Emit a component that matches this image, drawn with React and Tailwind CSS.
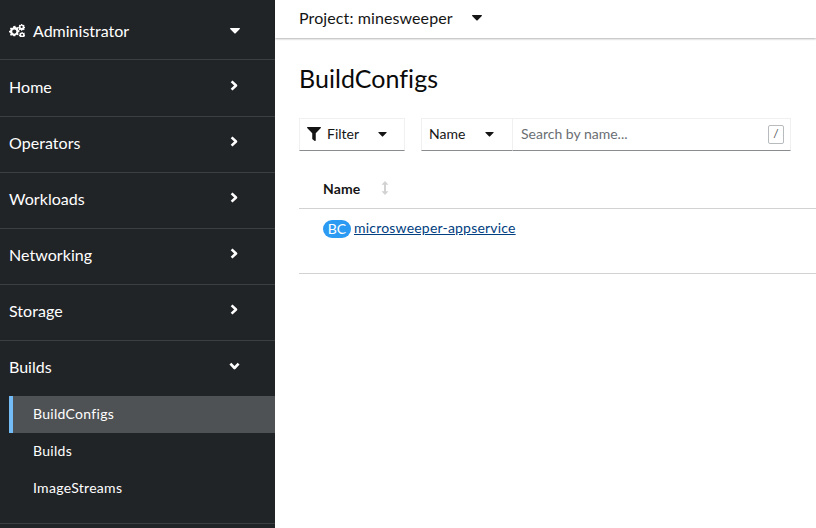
const sections = ['Home', 'Operators', 'Workloads', 'Networking', 'Storage'];
const subItems = ['BuildConfigs', 'Builds', 'ImageStreams'];

function Caret({ className }) {
  return (
    <svg viewBox="0 0 10 6" className={className} fill="currentColor">
      <path d="M0.6 0h8.8c.5 0 .8.6.4 1L5.4 5.4c-.2.2-.6.2-.8 0L.2 1C-.2.6.1 0 .6 0z" />
    </svg>
  );
}

function Cogs() {
  return (
    <svg viewBox="0 0 16 13" className="w-[16px] h-[13px]" fill="currentColor">
      <path fillRule="evenodd" d="M5 2l1.3-.2.4 1.1 1 .5 1.1-.5.9 1-.6 1 .3 1.1 1.1.5v1.3l-1.1.4-.3 1.1.6 1-.9.9-1.1-.5-1 .4-.4 1.2H4.4L4 11.6 3 11.2l-1.1.5-.9-.9.6-1-.4-1.1L0 8.3V7l1.2-.5.4-1.1-.6-1 .9-1 1.1.5 1-.5L4.4 2zM5.3 5.5a2.1 2.1 0 1 0 0 4.2 2.1 2.1 0 0 0 0-4.2z" />
      <path fillRule="evenodd" d="M13.2 0l.4.9.8.2.9-.4.6.7-.4.8.3.8.8.3v1l-.8.3-.3.8.4.8-.6.7-.9-.4-.8.2-.4.9h-1l-.3-.9-.8-.2-.9.4-.6-.7.4-.8-.3-.8-.8-.3v-1l.8-.3.3-.8-.4-.8.6-.7.9.4.8-.2.3-.9zM12.7 2a1.2 1.2 0 1 0 0 2.4 1.2 1.2 0 0 0 0-2.4z" transform="translate(1.2 0) scale(.9)" />
      <path fillRule="evenodd" d="M13.5 8l.3.7.7.2.7-.3.5.6-.3.7.2.7.7.3v.8l-.7.2-.2.7.3.7-.5.6-.7-.3-.7.2-.3.7h-.8l-.3-.7-.7-.2-.7.3-.5-.6.3-.7-.2-.7-.7-.2v-.8l.7-.3.2-.7-.3-.7.5-.6.7.3.7-.2.3-.7zM13.1 9.7a1 1 0 1 0 0 2 1 1 0 0 0 0-2z" />
    </svg>
  );
}

function NavRight() {
  return (
    <svg viewBox="0 0 8 11" className="w-[8px] h-[11px] mb-[3px]" fill="none" stroke="currentColor" strokeWidth="2.6" strokeLinejoin="round">
      <path d="M1.6 1.4L6 5.5L1.6 9.6" />
    </svg>
  );
}

function NavDown() {
  return (
    <svg viewBox="0 0 11 8" className="w-[11px] h-[8px] mb-[1px]" fill="none" stroke="currentColor" strokeWidth="2.6" strokeLinejoin="round">
      <path d="M1.4 1.6L5.5 6L9.6 1.6" />
    </svg>
  );
}

export default function App() {
  return (
    <div className="flex w-[816px] h-[528px] overflow-hidden bg-white font-['Lato',sans-serif]">
      <aside className="w-[275px] shrink-0 bg-[#212427] text-white">
        <div className="h-[60px] pl-[9px] pr-[35px] pt-[2px] flex items-center justify-between border-b border-[#3c3f42]">
          <div className="flex items-center gap-[8px]">
            <Cogs />
            <span className="text-[16px]">Administrator</span>
          </div>
          <Caret className="w-[10px] h-[6px]" />
        </div>
        {sections.map((s, i) => (
          <div
            key={s}
            className={
              i === 0
                ? 'h-[57px] pl-[9px] pr-[37px] pb-[3px] flex items-center justify-between border-b border-[#3c3f42]'
                : 'h-[56px] pl-[9px] pr-[37px] pb-[3px] flex items-center justify-between border-b border-[#3c3f42]'
            }
          >
            <span className="text-[16px] tracking-[0.05px]">{s}</span>
            <NavRight />
          </div>
        ))}
        <div className="border-b border-[#3c3f42] pb-[16px]">
          <div className="h-[55px] pl-[9px] pr-[35px] pb-[4px] flex items-center justify-between">
            <span className="text-[16px]">Builds</span>
            <NavDown />
          </div>
          {subItems.map((s, i) => (
            <div
              key={s}
              className={
                i === 0
                  ? 'h-[37px] ml-[9px] pl-[20px] pb-[2px] flex items-center text-[14px] tracking-[0.3px] bg-[#4f5255] border-l-[4px] border-[#73bcf7]'
                  : 'h-[37px] ml-[9px] pl-[24px] pb-[2px] flex items-center text-[14px] tracking-[0.3px]'
              }
            >
              {s}
            </div>
          ))}
        </div>
      </aside>

      <main className="flex-1 min-w-0">
        <div className="h-[38px] pl-[24px] pb-[3px] flex items-center gap-[19px] shadow-[0_1px_2px_rgba(3,3,3,0.3)] text-[16px] tracking-[0.1px] text-[#151515]">
          <span>Project: minesweeper</span>
          <Caret className="w-[10px] h-[6px]" />
        </div>

        <h1 className="mt-[24px] ml-[24px] text-[25px] leading-[32px] tracking-[0.05px] text-[#0a0a0a]">BuildConfigs</h1>

        <div className="mt-[24px] ml-[24px] flex text-[14px] text-[#151515]">
          <div className="w-[106px] h-[33px] flex items-center pl-[7px] pb-[3px] border border-[#f0f0f0] border-b-[#8a8d90]">
            <svg viewBox="0 0 512 512" className="w-[14px] h-[14px] mt-[2px]" fill="currentColor">
              <path d="M487.98 0H24.02C2.7 0-8 25.9 7.1 41L192 225.9V432c0 7.8 3.8 15.2 10.2 19.7l80 56C298 518.7 320 507.5 320 487.7V225.9L504.9 41C520 25.9 509.3 0 487.98 0z" />
            </svg>
            <span className="ml-[6px]">Filter</span>
            <Caret className="ml-[19px] mt-[2px] w-[9px] h-[5px]" />
          </div>
          <div className="ml-[16px] w-[91px] h-[33px] flex items-center pl-[7px] pb-[3px] border border-r-0 border-[#f0f0f0] border-b-[#8a8d90]">
            <span>Name</span>
            <Caret className="ml-[20px] mt-[2px] w-[9px] h-[5px]" />
          </div>
          <div className="w-[279px] h-[33px] flex items-center justify-between pl-[8px] pr-[6px] pb-[1px] border border-[#f0f0f0] border-b-[#8a8d90]">
            <span className="text-[#6a6e73] mb-[2px]">Search by name...</span>
            <span className="w-[16px] h-[19px] flex items-center justify-center rounded-[2px] border border-[#b8bbbe] text-[12px] text-[#4f5255]">/</span>
          </div>
        </div>

        <div className="mt-[19px] ml-[24px]">
          <div className="h-[39px] pl-[24px] pb-[2px] flex items-center border-b border-[#d2d2d2]">
            <span className="text-[14px] font-bold tracking-[0.1px] text-[#151515]">Name</span>
            <svg viewBox="0 0 8 14" className="ml-[21px] w-[8px] h-[14px] text-[#d2d2d2]" fill="currentColor">
              <path d="M4 0l3.5 3.8H5v6.4h2.5L4 14 .5 10.2H3V3.8H.5z" />
            </svg>
          </div>
          <div className="h-[65px] pl-[24px] pt-[8px] border-b border-[#d2d2d2]">
            <div className="flex items-center">
              <span className="w-[28px] h-[18px] rounded-[9px] bg-[#2b9af3] text-white text-[14px] flex items-center justify-center">BC</span>
              <a className="ml-[3px] mb-[2px] text-[14px] tracking-[0.2px] text-[#004080] underline">microsweeper-appservice</a>
            </div>
          </div>
        </div>
      </main>
    </div>
  );
}
